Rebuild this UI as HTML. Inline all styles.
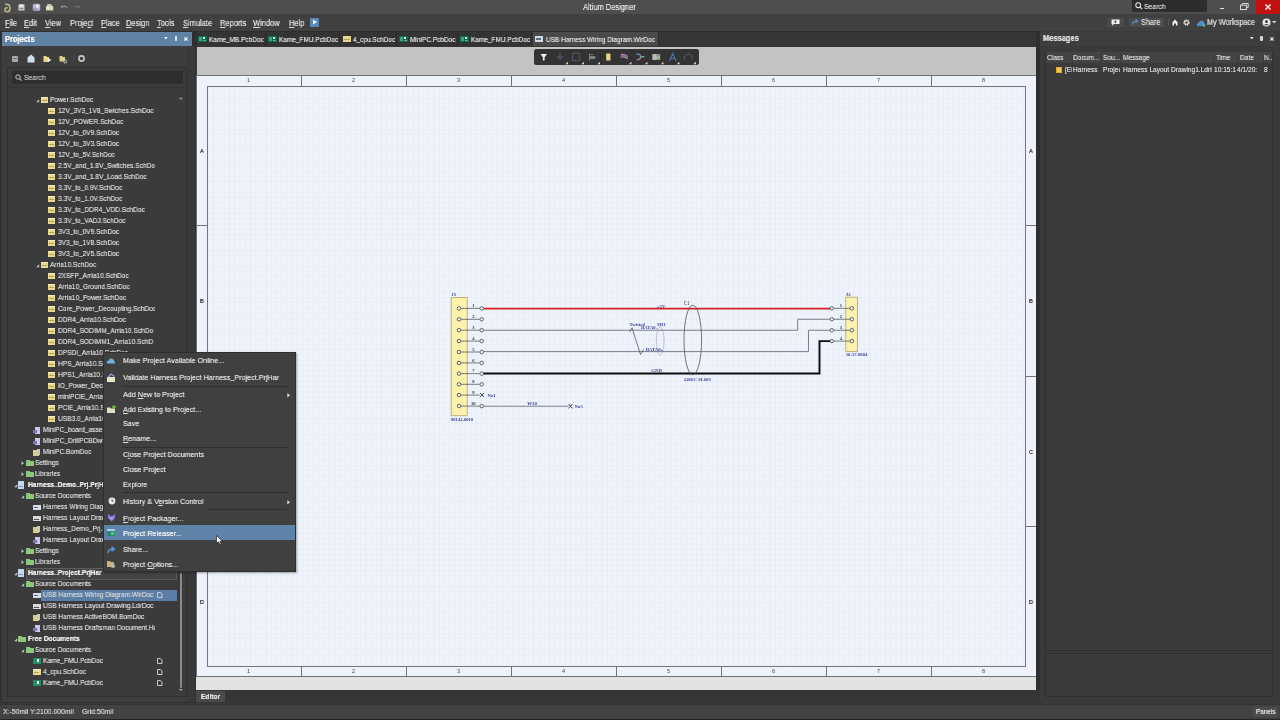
<!DOCTYPE html><html><head><meta charset="utf-8"><style>
*{margin:0;padding:0;box-sizing:border-box}
html,body{width:1280px;height:720px;overflow:hidden;background:#3a3a3a;font-family:"Liberation Sans",sans-serif}
div{position:absolute}
.t{white-space:nowrap;will-change:transform;transform-origin:0 50%;text-shadow:0 0 0.5px currentColor}
svg{position:absolute;overflow:visible}
</style></head><body><div style="left:0px;top:0px;width:1280px;height:13.5px;background:#4e4e4e"></div>
<svg style="left:3px;top:1.5px;" width="8" height="10" viewBox="0 0 8 10"><path d="M2.2 2.2 Q6.8 1.8 7 5.8 Q7.2 9.6 4.3 9.8 Q1.6 9.9 1.9 7.4 Q2.2 5.6 4.6 5.9" fill="none" stroke="#c8bb82" stroke-width="1.5"/></svg>
<svg style="left:17.5px;top:3.5px;" width="7" height="7" viewBox="0 0 7 7"><rect x="0.5" y="0.5" width="6" height="6" fill="#d8d8d8"/><rect x="1.5" y="3.8" width="4" height="1.6" fill="#8a8a8a"/><rect x="1.8" y="0.5" width="3.4" height="1.8" fill="#f4f4f4"/></svg>
<svg style="left:31.5px;top:3px;" width="9" height="8.5" viewBox="0 0 9 8.5"><rect x="0.8" y="0.8" width="7.4" height="7" rx="1.5" fill="#b6b4d6"/><circle cx="5.5" cy="3.2" r="1.7" fill="#e8e8f4"/><rect x="1.5" y="5.5" width="3" height="1.5" fill="#8886b0"/></svg>
<svg style="left:44.5px;top:3px;" width="9" height="8" viewBox="0 0 9 8"><path d="M1 3 H8.2 V7.4 H1 Z" fill="#d8dcc0"/><path d="M2.2 3 V1 H5.8 L7 2.2 V3" fill="#c8ccb0"/><rect x="2" y="4.2" width="2" height="1.6" fill="#f0f4d8"/></svg>
<svg style="left:59.5px;top:4px;" width="8" height="5" viewBox="0 0 8 5"><path d="M1.5 3.8 Q4.5 0.8 7.2 3.6" fill="none" stroke="#8a8a8a" stroke-width="1.3"/><path d="M0.3 2.2 L2.4 4.6 L3.1 1.6 Z" fill="#8a8a8a"/></svg>
<svg style="left:72.5px;top:4px;" width="8" height="5" viewBox="0 0 8 5"><path d="M0.8 3.6 Q3.5 0.8 6.5 3.8" fill="none" stroke="#6a6a6a" stroke-width="1.3"/><path d="M7.7 2.2 L5.6 4.6 L4.9 1.6 Z" fill="#6a6a6a"/></svg>
<div class="t" style="left:582.5px;top:2.04px;font-size:8.40px;line-height:10.92px;color:#e2e2e2;font-weight:normal;transform:scaleX(0.8929);">Altium Designer</div>
<div style="left:1132px;top:0px;width:75px;height:11.5px;background:#2d2d2d;border-radius:0 0 2px 2px"></div>
<svg style="left:1134.5px;top:2px;" width="8" height="8" viewBox="0 0 8 8"><circle cx="3.2" cy="3.2" r="2.4" fill="none" stroke="#e0e0e0" stroke-width="1.1"/><path d="M5 5 L7.2 7.2" stroke="#e0e0e0" stroke-width="1.2"/></svg>
<div class="t" style="left:1143.5px;top:1.65px;font-size:7.62px;line-height:9.90px;color:#d0d0d0;font-weight:normal;transform:scaleX(0.8929);">Search</div>
<div style="left:1219.5px;top:8.2px;width:4.5px;height:1.3px;background:#e0e0e0"></div>
<svg style="left:1240px;top:3px;" width="9" height="7" viewBox="0 0 9 7"><rect x="0.5" y="2.2" width="6" height="4.3" fill="none" stroke="#d8d8d8" stroke-width="1"/><path d="M2.2 2.2 V0.5 H8.2 V4.5 H6.6" fill="none" stroke="#d8d8d8" stroke-width="1"/></svg>
<div style="left:1256px;top:0px;width:24px;height:13.5px;background:#c2120f"></div>
<svg style="left:1265px;top:3.5px;" width="6" height="6" viewBox="0 0 6 6"><path d="M0.5 0.5 L5.5 5.5 M5.5 0.5 L0.5 5.5" stroke="#fff" stroke-width="1.4"/></svg>
<div style="left:0px;top:13.5px;width:1280px;height:17.5px;background:#404040"></div>
<div class="t" style="left:5px;top:17.54px;font-size:8.40px;line-height:10.92px;color:#dcdcdc;font-weight:normal;transform:scaleX(0.8929);"><u>F</u>ile</div>
<div class="t" style="left:24px;top:17.54px;font-size:8.40px;line-height:10.92px;color:#dcdcdc;font-weight:normal;transform:scaleX(0.8929);"><u>E</u>dit</div>
<div class="t" style="left:45px;top:17.54px;font-size:8.40px;line-height:10.92px;color:#dcdcdc;font-weight:normal;transform:scaleX(0.8929);"><u>V</u>iew</div>
<div class="t" style="left:69.5px;top:17.54px;font-size:8.40px;line-height:10.92px;color:#dcdcdc;font-weight:normal;transform:scaleX(0.8929);">Proje<u>c</u>t</div>
<div class="t" style="left:100.5px;top:17.54px;font-size:8.40px;line-height:10.92px;color:#dcdcdc;font-weight:normal;transform:scaleX(0.8929);"><u>P</u>lace</div>
<div class="t" style="left:125.7px;top:17.54px;font-size:8.40px;line-height:10.92px;color:#dcdcdc;font-weight:normal;transform:scaleX(0.8929);"><u>D</u>esign</div>
<div class="t" style="left:157px;top:17.54px;font-size:8.40px;line-height:10.92px;color:#dcdcdc;font-weight:normal;transform:scaleX(0.8929);"><u>T</u>ools</div>
<div class="t" style="left:182.7px;top:17.54px;font-size:8.40px;line-height:10.92px;color:#dcdcdc;font-weight:normal;transform:scaleX(0.8929);"><u>S</u>imulate</div>
<div class="t" style="left:220px;top:17.54px;font-size:8.40px;line-height:10.92px;color:#dcdcdc;font-weight:normal;transform:scaleX(0.8929);"><u>R</u>eports</div>
<div class="t" style="left:253px;top:17.54px;font-size:8.40px;line-height:10.92px;color:#dcdcdc;font-weight:normal;transform:scaleX(0.8929);"><u>W</u>indow</div>
<div class="t" style="left:288.7px;top:17.54px;font-size:8.40px;line-height:10.92px;color:#dcdcdc;font-weight:normal;transform:scaleX(0.8929);"><u>H</u>elp</div>
<div style="left:310px;top:17.5px;width:9px;height:9px;background:#5d86b8;border-radius:1px"></div>
<svg style="left:312px;top:19px;" width="6" height="6" viewBox="0 0 6 6"><path d="M1 0.5 L5 3 L1 5.5 Z" fill="#fff"/></svg>
<div style="left:1107px;top:17.5px;width:17px;height:9px;background:#4b4b4b"></div>
<svg style="left:1111px;top:19px;" width="9" height="7" viewBox="0 0 9 7"><path d="M0.5 0.5 H8.5 V5 H3 L1.2 6.8 V5 H0.5 Z" fill="#f0f0f0"/><rect x="3.6" y="1.6" width="1.6" height="2.4" fill="#4b4b4b"/></svg>
<div style="left:1128.8px;top:17.5px;width:35px;height:9px;background:#4c4c4c"></div>
<svg style="left:1131.5px;top:19px;" width="7" height="6" viewBox="0 0 7 6"><path d="M0.5 5.5 Q1 2 5 2 M3.5 0.5 L5.5 2 L3.5 3.6" fill="none" stroke="#5b8fd0" stroke-width="1.2"/></svg>
<div class="t" style="left:1140.5px;top:17.68px;font-size:8.18px;line-height:10.63px;color:#d8d8d8;font-weight:normal;transform:scaleX(0.8929);">Share</div>
<div style="left:1168px;top:18px;width:1px;height:8px;background:#555"></div>
<svg style="left:1171.5px;top:18.5px;" width="6" height="7" viewBox="0 0 6 7"><path d="M0.5 3.2 L3 0.6 L5.5 3.2 V6.5 H4 V4.5 H2 V6.5 H0.5 Z" fill="#f4f4f4"/></svg>
<svg style="left:1183px;top:18.5px;" width="7" height="7" viewBox="0 0 7 7"><circle cx="3.5" cy="3.5" r="2.3" fill="none" stroke="#f0f0f0" stroke-width="1.6" stroke-dasharray="1.2 0.6"/><circle cx="3.5" cy="3.5" r="1.6" fill="none" stroke="#f0f0f0" stroke-width="0.8"/></svg>
<svg style="left:1195.5px;top:18.5px;" width="10" height="8" viewBox="0 0 10 8"><path d="M1 7 Q0 4.5 2.5 4 Q3 1 6 1.5 Q8.5 2 8.5 4.5 Q10 5 9.2 7 Z" fill="#4a90d0"/><circle cx="8" cy="6.6" r="1.4" fill="#5bb05b"/></svg>
<div class="t" style="left:1206.5px;top:17.68px;font-size:8.18px;line-height:10.63px;color:#dadada;font-weight:normal;transform:scaleX(0.8929);">My Workspace</div>
<svg style="left:1261.5px;top:18px;" width="9" height="9" viewBox="0 0 9 9"><circle cx="4.5" cy="4.5" r="4" fill="#e8e8e8"/><circle cx="4.5" cy="3.4" r="1.5" fill="#404040"/><path d="M1.8 7.3 Q4.5 4.6 7.2 7.3" fill="#404040"/></svg>
<svg style="left:1272px;top:21px;" width="5" height="3" viewBox="0 0 5 3"><path d="M0 0 H4.5 L2.25 2.5 Z" fill="#d0d0d0"/></svg>
<div style="left:0px;top:31px;width:196px;height:672px;background:#2f2f2f"></div>
<div style="left:0px;top:46px;width:195px;height:656px;background:#393939"></div>
<div style="left:0px;top:46px;width:2px;height:657px;background:#333"></div>
<div style="left:2px;top:46px;width:185px;height:656px;background:#3d3d3d"></div>
<div style="left:2px;top:32px;width:190px;height:14px;background:#6082a5"></div>
<div class="t" style="left:5px;top:33.74px;font-size:8.40px;line-height:10.92px;color:#ffffff;font-weight:bold;transform:scaleX(0.8929);">Projects</div>
<svg style="left:164px;top:37px;" width="4" height="3" viewBox="0 0 4 3"><path d="M0 0 H3.6 L1.8 2.6 Z" fill="#f4f8ff"/></svg>
<div style="left:174.5px;top:36px;width:2.5px;height:4.5px;background:#dde8f8;border-radius:1px"></div>
<svg style="left:184px;top:37px;" width="4" height="4" viewBox="0 0 4 4"><path d="M0.3 0.3 L3.5 3.5 M3.5 0.3 L0.3 3.5" stroke="#f4f8ff" stroke-width="1.1"/></svg>
<div style="left:11.5px;top:55.5px;width:6px;height:6px;background:#a8a8a8;border-radius:1px"></div>
<div style="left:12.5px;top:58px;width:4px;height:1px;background:#666"></div>
<svg style="left:27px;top:54px;" width="8" height="9" viewBox="0 0 8 9"><path d="M4 0.5 L7.5 3.5 V8.5 H0.5 V3.5 Z" fill="#cfe0f4"/></svg>
<svg style="left:43px;top:54.5px;" width="9" height="8" viewBox="0 0 9 8"><path d="M0.5 1 H3 L4 2 H6 V7 H0.5 Z" fill="#e8d88a"/><path d="M5 3 L8.5 5 L5 7 Z" fill="#f4f4f4"/></svg>
<svg style="left:59px;top:54.5px;" width="9" height="9" viewBox="0 0 9 9"><path d="M0.5 1 H3 L4 2 H6 V6.5 H0.5 Z" fill="#e0cf86"/><circle cx="6.2" cy="6.5" r="1.6" fill="none" stroke="#bbb" stroke-width="1"/></svg>
<div style="left:72.5px;top:54px;width:0.8px;height:9px;background:#4a4a4a"></div>
<svg style="left:78px;top:55px;" width="7" height="7" viewBox="0 0 7 7"><circle cx="3.5" cy="3.5" r="2.6" fill="none" stroke="#c8c8c8" stroke-width="1.6"/></svg>
<div style="left:6.8px;top:66.5px;width:180.5px;height:630.5px;background:#3b3b3b;border:1px solid #303030"></div>
<div style="left:11.5px;top:71px;width:171px;height:12.5px;background:#2e2e2e"></div>
<div style="left:8.5px;top:86.6px;width:178px;height:0.8px;background:#333"></div>
<svg style="left:14.5px;top:73.5px;" width="8" height="8" viewBox="0 0 8 8"><circle cx="3" cy="3" r="2.2" fill="none" stroke="#c8c8c8" stroke-width="1"/><path d="M4.6 4.6 L6.6 6.6" stroke="#c8c8c8" stroke-width="1.2"/></svg>
<div class="t" style="left:24px;top:72.85px;font-size:7.62px;line-height:9.90px;color:#b8b8b8;font-weight:normal;transform:scaleX(0.8929);">Search</div>
<div style="left:196px;top:31px;width:840px;height:15.8px;background:#363636"></div>
<div style="left:196px;top:31px;width:840px;height:0.8px;background:#2c2c2c"></div>
<div style="left:196px;top:31.8px;width:69px;height:14.2px;background:#343434"></div>
<div style="left:265px;top:31.8px;width:1px;height:14.2px;background:#2a2a2a"></div>
<div style="left:198.3px;top:35.6px;width:8.8px;height:6.6px;background:#0f6a48"></div>
<div style="left:199.3px;top:36.6px;width:2.8px;height:4.4px;background:#48a078"></div>
<div style="left:202.9px;top:36.8px;width:2.4px;height:2.2px;background:#c4ffe4"></div>
<div style="left:202.7px;top:40px;width:3px;height:1.2px;background:#5cb88c"></div>
<div class="t" style="left:209px;top:34.67px;font-size:7.28px;line-height:9.46px;color:#dadada;font-weight:normal;transform:scaleX(0.8929);">Kame<span style="position:relative;top:-0.9px">_</span>MB.PcbDoc</div>
<div style="left:266px;top:31.8px;width:73px;height:14.2px;background:#343434"></div>
<div style="left:339px;top:31.8px;width:1px;height:14.2px;background:#2a2a2a"></div>
<div style="left:268.3px;top:35.6px;width:8.8px;height:6.6px;background:#0f6a48"></div>
<div style="left:269.3px;top:36.6px;width:2.8px;height:4.4px;background:#48a078"></div>
<div style="left:272.9px;top:36.8px;width:2.4px;height:2.2px;background:#c4ffe4"></div>
<div style="left:272.7px;top:40px;width:3px;height:1.2px;background:#5cb88c"></div>
<div class="t" style="left:279px;top:34.67px;font-size:7.28px;line-height:9.46px;color:#dadada;font-weight:normal;transform:scaleX(0.8929);">Kame<span style="position:relative;top:-0.9px">_</span>FMU.PcbDoc</div>
<div style="left:340px;top:31.8px;width:56px;height:14.2px;background:#343434"></div>
<div style="left:396px;top:31.8px;width:1px;height:14.2px;background:#2a2a2a"></div>
<div style="left:342.5px;top:35.8px;width:8px;height:6px;background:#e6d690"></div>
<div style="left:343.5px;top:38.5px;width:6px;height:1px;background:#b8a458"></div>
<div class="t" style="left:353px;top:34.67px;font-size:7.28px;line-height:9.46px;color:#dadada;font-weight:normal;transform:scaleX(0.8929);">4<span style="position:relative;top:-0.9px">_</span>cpu.SchDoc</div>
<div style="left:397px;top:31.8px;width:60px;height:14.2px;background:#343434"></div>
<div style="left:457px;top:31.8px;width:1px;height:14.2px;background:#2a2a2a"></div>
<div style="left:399.3px;top:35.6px;width:8.8px;height:6.6px;background:#0f6a48"></div>
<div style="left:400.3px;top:36.6px;width:2.8px;height:4.4px;background:#48a078"></div>
<div style="left:403.9px;top:36.8px;width:2.4px;height:2.2px;background:#c4ffe4"></div>
<div style="left:403.7px;top:40px;width:3px;height:1.2px;background:#5cb88c"></div>
<div class="t" style="left:410px;top:34.67px;font-size:7.28px;line-height:9.46px;color:#dadada;font-weight:normal;transform:scaleX(0.8929);">MiniPC.PcbDoc</div>
<div style="left:458px;top:31.8px;width:72.5px;height:14.2px;background:#343434"></div>
<div style="left:530.5px;top:31.8px;width:1px;height:14.2px;background:#2a2a2a"></div>
<div style="left:460.3px;top:35.6px;width:8.8px;height:6.6px;background:#0f6a48"></div>
<div style="left:461.3px;top:36.6px;width:2.8px;height:4.4px;background:#48a078"></div>
<div style="left:464.9px;top:36.8px;width:2.4px;height:2.2px;background:#c4ffe4"></div>
<div style="left:464.7px;top:40px;width:3px;height:1.2px;background:#5cb88c"></div>
<div class="t" style="left:471px;top:34.67px;font-size:7.28px;line-height:9.46px;color:#dadada;font-weight:normal;transform:scaleX(0.8929);">Kame<span style="position:relative;top:-0.9px">_</span>FMU.PcbDoc</div>
<div style="left:532.5px;top:31.8px;width:125.5px;height:14.2px;background:#4a4a4a"></div>
<div style="left:658px;top:31.8px;width:1px;height:14.2px;background:#2a2a2a"></div>
<div style="left:535.0px;top:35.8px;width:8px;height:6px;background:#d4d8e4"></div>
<div style="left:536.0px;top:38.3px;width:4.5px;height:1.6px;background:#5a6a8a"></div>
<div class="t" style="left:545.5px;top:34.67px;font-size:7.28px;line-height:9.46px;color:#dadada;font-weight:normal;transform:scaleX(0.8929);">USB Harness Wiring Diagram.WirDoc</div>
<div style="left:197px;top:46.8px;width:839px;height:643.2px;background:#c3c3c3"></div>
<div style="left:196px;top:676px;width:840px;height:14px;background:#e2e2e2"></div>
<div style="left:533.7px;top:49px;width:165.5px;height:15.7px;background:#333;border-radius:2.5px"></div>
<div style="left:196px;top:75px;width:840px;height:602px;background:#eef2fa;border-top:1px solid #6d7178;border-bottom:1px solid #6d7178;border-left:1px solid #6d7178"></div>
<div style="left:207px;top:86px;width:819px;height:580.5px;background-color:#eff3fb;background-image:linear-gradient(#e8edf6 0.8px,transparent 0.8px),linear-gradient(90deg,#e8edf6 0.8px,transparent 0.8px);background-size:5.25px 5.25px;border:1px solid #6f7680"></div>
<div style="left:301px;top:75px;width:1px;height:11px;background:#70757d"></div>
<div style="left:301px;top:666px;width:1px;height:10px;background:#70757d"></div>
<div style="left:406px;top:75px;width:1px;height:11px;background:#70757d"></div>
<div style="left:406px;top:666px;width:1px;height:10px;background:#70757d"></div>
<div style="left:511px;top:75px;width:1px;height:11px;background:#70757d"></div>
<div style="left:511px;top:666px;width:1px;height:10px;background:#70757d"></div>
<div style="left:616px;top:75px;width:1px;height:11px;background:#70757d"></div>
<div style="left:616px;top:666px;width:1px;height:10px;background:#70757d"></div>
<div style="left:721px;top:75px;width:1px;height:11px;background:#70757d"></div>
<div style="left:721px;top:666px;width:1px;height:10px;background:#70757d"></div>
<div style="left:826px;top:75px;width:1px;height:11px;background:#70757d"></div>
<div style="left:826px;top:666px;width:1px;height:10px;background:#70757d"></div>
<div style="left:931px;top:75px;width:1px;height:11px;background:#70757d"></div>
<div style="left:931px;top:666px;width:1px;height:10px;background:#70757d"></div>
<div class="t" style="left:246.9px;top:77.36px;font-size:5.60px;line-height:7.28px;color:#4a4a4a;font-weight:normal;transform:scaleX(0.8929);text-shadow:none">1</div>
<div class="t" style="left:246.9px;top:667.86px;font-size:5.60px;line-height:7.28px;color:#4a4a4a;font-weight:normal;transform:scaleX(0.8929);text-shadow:none">1</div>
<div class="t" style="left:351.9px;top:77.36px;font-size:5.60px;line-height:7.28px;color:#4a4a4a;font-weight:normal;transform:scaleX(0.8929);text-shadow:none">2</div>
<div class="t" style="left:351.9px;top:667.86px;font-size:5.60px;line-height:7.28px;color:#4a4a4a;font-weight:normal;transform:scaleX(0.8929);text-shadow:none">2</div>
<div class="t" style="left:456.9px;top:77.36px;font-size:5.60px;line-height:7.28px;color:#4a4a4a;font-weight:normal;transform:scaleX(0.8929);text-shadow:none">3</div>
<div class="t" style="left:456.9px;top:667.86px;font-size:5.60px;line-height:7.28px;color:#4a4a4a;font-weight:normal;transform:scaleX(0.8929);text-shadow:none">3</div>
<div class="t" style="left:561.9px;top:77.36px;font-size:5.60px;line-height:7.28px;color:#4a4a4a;font-weight:normal;transform:scaleX(0.8929);text-shadow:none">4</div>
<div class="t" style="left:561.9px;top:667.86px;font-size:5.60px;line-height:7.28px;color:#4a4a4a;font-weight:normal;transform:scaleX(0.8929);text-shadow:none">4</div>
<div class="t" style="left:666.9px;top:77.36px;font-size:5.60px;line-height:7.28px;color:#4a4a4a;font-weight:normal;transform:scaleX(0.8929);text-shadow:none">5</div>
<div class="t" style="left:666.9px;top:667.86px;font-size:5.60px;line-height:7.28px;color:#4a4a4a;font-weight:normal;transform:scaleX(0.8929);text-shadow:none">5</div>
<div class="t" style="left:771.9px;top:77.36px;font-size:5.60px;line-height:7.28px;color:#4a4a4a;font-weight:normal;transform:scaleX(0.8929);text-shadow:none">6</div>
<div class="t" style="left:771.9px;top:667.86px;font-size:5.60px;line-height:7.28px;color:#4a4a4a;font-weight:normal;transform:scaleX(0.8929);text-shadow:none">6</div>
<div class="t" style="left:876.9px;top:77.36px;font-size:5.60px;line-height:7.28px;color:#4a4a4a;font-weight:normal;transform:scaleX(0.8929);text-shadow:none">7</div>
<div class="t" style="left:876.9px;top:667.86px;font-size:5.60px;line-height:7.28px;color:#4a4a4a;font-weight:normal;transform:scaleX(0.8929);text-shadow:none">7</div>
<div class="t" style="left:981.9px;top:77.36px;font-size:5.60px;line-height:7.28px;color:#4a4a4a;font-weight:normal;transform:scaleX(0.8929);text-shadow:none">8</div>
<div class="t" style="left:981.9px;top:667.86px;font-size:5.60px;line-height:7.28px;color:#4a4a4a;font-weight:normal;transform:scaleX(0.8929);text-shadow:none">8</div>
<div style="left:196px;top:225.25px;width:11px;height:1px;background:#70757d"></div>
<div style="left:1025px;top:225.25px;width:11px;height:1px;background:#70757d"></div>
<div style="left:196px;top:375.5px;width:11px;height:1px;background:#70757d"></div>
<div style="left:1025px;top:375.5px;width:11px;height:1px;background:#70757d"></div>
<div style="left:196px;top:525.75px;width:11px;height:1px;background:#70757d"></div>
<div style="left:1025px;top:525.75px;width:11px;height:1px;background:#70757d"></div>
<div class="t" style="left:200px;top:147.00px;font-size:6.16px;line-height:8.01px;color:#333;font-weight:normal;transform:scaleX(0.8929);">A</div>
<div class="t" style="left:1028.5px;top:147.00px;font-size:6.16px;line-height:8.01px;color:#333;font-weight:normal;transform:scaleX(0.8929);">A</div>
<div class="t" style="left:200px;top:297.25px;font-size:6.16px;line-height:8.01px;color:#333;font-weight:normal;transform:scaleX(0.8929);">B</div>
<div class="t" style="left:1028.5px;top:297.25px;font-size:6.16px;line-height:8.01px;color:#333;font-weight:normal;transform:scaleX(0.8929);">B</div>
<div class="t" style="left:200px;top:447.50px;font-size:6.16px;line-height:8.01px;color:#333;font-weight:normal;transform:scaleX(0.8929);">C</div>
<div class="t" style="left:1028.5px;top:447.50px;font-size:6.16px;line-height:8.01px;color:#333;font-weight:normal;transform:scaleX(0.8929);">C</div>
<div class="t" style="left:200px;top:597.75px;font-size:6.16px;line-height:8.01px;color:#333;font-weight:normal;transform:scaleX(0.8929);">D</div>
<div class="t" style="left:1028.5px;top:597.75px;font-size:6.16px;line-height:8.01px;color:#333;font-weight:normal;transform:scaleX(0.8929);">D</div>
<div style="left:8.5px;top:88px;width:170px;height:605px;overflow:hidden">
<svg style="left:27.5px;top:10.700000000000003px" width="4" height="4"><path d="M3.2 0.2 V3.2 H0.2 Z" fill="#c8c8c8"/></svg>
<div style="left:32.0px;top:9.200000000000003px;width:7.5px;height:5.8px;background:#e8d890;border-top:1px solid #f4ecc0"></div>
<div style="left:33.2px;top:11.800000000000002px;width:5px;height:1px;background:#b8a058"></div>
<div style="left:41.3px;top:7.20px;width:105.20px;height:10px;overflow:hidden"><div class="t" style="left:0;top:0;font-size:7.39px;line-height:10px;color:#d2d2d2;font-weight:normal;transform:scaleX(0.8929);text-shadow:0 0 0.3px currentColor">Power.SchDoc</div></div>
<div style="left:39.3px;top:20.200000000000003px;width:7.5px;height:5.8px;background:#e8d890;border-top:1px solid #f4ecc0"></div>
<div style="left:40.5px;top:22.800000000000004px;width:5px;height:1px;background:#b8a058"></div>
<div style="left:49.1px;top:18.20px;width:97.40px;height:10px;overflow:hidden"><div class="t" style="left:0;top:0;font-size:7.39px;line-height:10px;color:#d2d2d2;font-weight:normal;transform:scaleX(0.8929);text-shadow:0 0 0.3px currentColor">12V<span style="position:relative;top:-0.9px">_</span>3V3<span style="position:relative;top:-0.9px">_</span>1V8<span style="position:relative;top:-0.9px">_</span>Swiches.SchDoc</div></div>
<div style="left:39.3px;top:31.200000000000003px;width:7.5px;height:5.8px;background:#e8d890;border-top:1px solid #f4ecc0"></div>
<div style="left:40.5px;top:33.800000000000004px;width:5px;height:1px;background:#b8a058"></div>
<div style="left:49.1px;top:29.20px;width:97.40px;height:10px;overflow:hidden"><div class="t" style="left:0;top:0;font-size:7.39px;line-height:10px;color:#d2d2d2;font-weight:normal;transform:scaleX(0.8929);text-shadow:0 0 0.3px currentColor">12V<span style="position:relative;top:-0.9px">_</span>POWER.SchDoc</div></div>
<div style="left:39.3px;top:42.19999999999999px;width:7.5px;height:5.8px;background:#e8d890;border-top:1px solid #f4ecc0"></div>
<div style="left:40.5px;top:44.79999999999999px;width:5px;height:1px;background:#b8a058"></div>
<div style="left:49.1px;top:40.20px;width:97.40px;height:10px;overflow:hidden"><div class="t" style="left:0;top:0;font-size:7.39px;line-height:10px;color:#d2d2d2;font-weight:normal;transform:scaleX(0.8929);text-shadow:0 0 0.3px currentColor">12V<span style="position:relative;top:-0.9px">_</span>to<span style="position:relative;top:-0.9px">_</span>0V9.SchDoc</div></div>
<div style="left:39.3px;top:53.19999999999999px;width:7.5px;height:5.8px;background:#e8d890;border-top:1px solid #f4ecc0"></div>
<div style="left:40.5px;top:55.79999999999999px;width:5px;height:1px;background:#b8a058"></div>
<div style="left:49.1px;top:51.20px;width:97.40px;height:10px;overflow:hidden"><div class="t" style="left:0;top:0;font-size:7.39px;line-height:10px;color:#d2d2d2;font-weight:normal;transform:scaleX(0.8929);text-shadow:0 0 0.3px currentColor">12V<span style="position:relative;top:-0.9px">_</span>to<span style="position:relative;top:-0.9px">_</span>3V3.SchDoc</div></div>
<div style="left:39.3px;top:64.19999999999999px;width:7.5px;height:5.8px;background:#e8d890;border-top:1px solid #f4ecc0"></div>
<div style="left:40.5px;top:66.79999999999998px;width:5px;height:1px;background:#b8a058"></div>
<div style="left:49.1px;top:62.20px;width:97.40px;height:10px;overflow:hidden"><div class="t" style="left:0;top:0;font-size:7.39px;line-height:10px;color:#d2d2d2;font-weight:normal;transform:scaleX(0.8929);text-shadow:0 0 0.3px currentColor">12V<span style="position:relative;top:-0.9px">_</span>to<span style="position:relative;top:-0.9px">_</span>5V.SchDoc</div></div>
<div style="left:39.3px;top:75.19999999999999px;width:7.5px;height:5.8px;background:#e8d890;border-top:1px solid #f4ecc0"></div>
<div style="left:40.5px;top:77.79999999999998px;width:5px;height:1px;background:#b8a058"></div>
<div style="left:49.1px;top:73.20px;width:97.40px;height:10px;overflow:hidden"><div class="t" style="left:0;top:0;font-size:7.39px;line-height:10px;color:#d2d2d2;font-weight:normal;transform:scaleX(0.8929);text-shadow:0 0 0.3px currentColor">2.5V<span style="position:relative;top:-0.9px">_</span>and<span style="position:relative;top:-0.9px">_</span>1.8V<span style="position:relative;top:-0.9px">_</span>Switches.SchDo</div></div>
<div style="left:39.3px;top:86.19999999999999px;width:7.5px;height:5.8px;background:#e8d890;border-top:1px solid #f4ecc0"></div>
<div style="left:40.5px;top:88.79999999999998px;width:5px;height:1px;background:#b8a058"></div>
<div style="left:49.1px;top:84.20px;width:97.40px;height:10px;overflow:hidden"><div class="t" style="left:0;top:0;font-size:7.39px;line-height:10px;color:#d2d2d2;font-weight:normal;transform:scaleX(0.8929);text-shadow:0 0 0.3px currentColor">3.3V<span style="position:relative;top:-0.9px">_</span>and<span style="position:relative;top:-0.9px">_</span>1.8V<span style="position:relative;top:-0.9px">_</span>Load.SchDoc</div></div>
<div style="left:39.3px;top:97.19999999999999px;width:7.5px;height:5.8px;background:#e8d890;border-top:1px solid #f4ecc0"></div>
<div style="left:40.5px;top:99.79999999999998px;width:5px;height:1px;background:#b8a058"></div>
<div style="left:49.1px;top:95.20px;width:97.40px;height:10px;overflow:hidden"><div class="t" style="left:0;top:0;font-size:7.39px;line-height:10px;color:#d2d2d2;font-weight:normal;transform:scaleX(0.8929);text-shadow:0 0 0.3px currentColor">3.3V<span style="position:relative;top:-0.9px">_</span>to<span style="position:relative;top:-0.9px">_</span>0.9V.SchDoc</div></div>
<div style="left:39.3px;top:108.19999999999999px;width:7.5px;height:5.8px;background:#e8d890;border-top:1px solid #f4ecc0"></div>
<div style="left:40.5px;top:110.79999999999998px;width:5px;height:1px;background:#b8a058"></div>
<div style="left:49.1px;top:106.20px;width:97.40px;height:10px;overflow:hidden"><div class="t" style="left:0;top:0;font-size:7.39px;line-height:10px;color:#d2d2d2;font-weight:normal;transform:scaleX(0.8929);text-shadow:0 0 0.3px currentColor">3.3V<span style="position:relative;top:-0.9px">_</span>to<span style="position:relative;top:-0.9px">_</span>1.0V.SchDoc</div></div>
<div style="left:39.3px;top:119.19999999999999px;width:7.5px;height:5.8px;background:#e8d890;border-top:1px solid #f4ecc0"></div>
<div style="left:40.5px;top:121.79999999999998px;width:5px;height:1px;background:#b8a058"></div>
<div style="left:49.1px;top:117.20px;width:97.40px;height:10px;overflow:hidden"><div class="t" style="left:0;top:0;font-size:7.39px;line-height:10px;color:#d2d2d2;font-weight:normal;transform:scaleX(0.8929);text-shadow:0 0 0.3px currentColor">3.3V<span style="position:relative;top:-0.9px">_</span>to<span style="position:relative;top:-0.9px">_</span>DDR4<span style="position:relative;top:-0.9px">_</span>VDD.SchDoc</div></div>
<div style="left:39.3px;top:130.2px;width:7.5px;height:5.8px;background:#e8d890;border-top:1px solid #f4ecc0"></div>
<div style="left:40.5px;top:132.79999999999998px;width:5px;height:1px;background:#b8a058"></div>
<div style="left:49.1px;top:128.20px;width:97.40px;height:10px;overflow:hidden"><div class="t" style="left:0;top:0;font-size:7.39px;line-height:10px;color:#d2d2d2;font-weight:normal;transform:scaleX(0.8929);text-shadow:0 0 0.3px currentColor">3.3V<span style="position:relative;top:-0.9px">_</span>to<span style="position:relative;top:-0.9px">_</span>VADJ.SchDoc</div></div>
<div style="left:39.3px;top:141.2px;width:7.5px;height:5.8px;background:#e8d890;border-top:1px solid #f4ecc0"></div>
<div style="left:40.5px;top:143.79999999999998px;width:5px;height:1px;background:#b8a058"></div>
<div style="left:49.1px;top:139.20px;width:97.40px;height:10px;overflow:hidden"><div class="t" style="left:0;top:0;font-size:7.39px;line-height:10px;color:#d2d2d2;font-weight:normal;transform:scaleX(0.8929);text-shadow:0 0 0.3px currentColor">3V3<span style="position:relative;top:-0.9px">_</span>to<span style="position:relative;top:-0.9px">_</span>0V9.SchDoc</div></div>
<div style="left:39.3px;top:152.2px;width:7.5px;height:5.8px;background:#e8d890;border-top:1px solid #f4ecc0"></div>
<div style="left:40.5px;top:154.79999999999998px;width:5px;height:1px;background:#b8a058"></div>
<div style="left:49.1px;top:150.20px;width:97.40px;height:10px;overflow:hidden"><div class="t" style="left:0;top:0;font-size:7.39px;line-height:10px;color:#d2d2d2;font-weight:normal;transform:scaleX(0.8929);text-shadow:0 0 0.3px currentColor">3V3<span style="position:relative;top:-0.9px">_</span>to<span style="position:relative;top:-0.9px">_</span>1V8.SchDoc</div></div>
<div style="left:39.3px;top:163.2px;width:7.5px;height:5.8px;background:#e8d890;border-top:1px solid #f4ecc0"></div>
<div style="left:40.5px;top:165.79999999999998px;width:5px;height:1px;background:#b8a058"></div>
<div style="left:49.1px;top:161.20px;width:97.40px;height:10px;overflow:hidden"><div class="t" style="left:0;top:0;font-size:7.39px;line-height:10px;color:#d2d2d2;font-weight:normal;transform:scaleX(0.8929);text-shadow:0 0 0.3px currentColor">3V3<span style="position:relative;top:-0.9px">_</span>to<span style="position:relative;top:-0.9px">_</span>2V5.SchDoc</div></div>
<svg style="left:27.5px;top:175.7px" width="4" height="4"><path d="M3.2 0.2 V3.2 H0.2 Z" fill="#c8c8c8"/></svg>
<div style="left:32.0px;top:174.2px;width:7.5px;height:5.8px;background:#e8d890;border-top:1px solid #f4ecc0"></div>
<div style="left:33.2px;top:176.79999999999998px;width:5px;height:1px;background:#b8a058"></div>
<div style="left:41.3px;top:172.20px;width:105.20px;height:10px;overflow:hidden"><div class="t" style="left:0;top:0;font-size:7.39px;line-height:10px;color:#d2d2d2;font-weight:normal;transform:scaleX(0.8929);text-shadow:0 0 0.3px currentColor">Arria10.SchDoc</div></div>
<div style="left:39.3px;top:185.2px;width:7.5px;height:5.8px;background:#e8d890;border-top:1px solid #f4ecc0"></div>
<div style="left:40.5px;top:187.79999999999998px;width:5px;height:1px;background:#b8a058"></div>
<div style="left:49.1px;top:183.20px;width:97.40px;height:10px;overflow:hidden"><div class="t" style="left:0;top:0;font-size:7.39px;line-height:10px;color:#d2d2d2;font-weight:normal;transform:scaleX(0.8929);text-shadow:0 0 0.3px currentColor">2XSFP<span style="position:relative;top:-0.9px">_</span>Arria10.SchDoc</div></div>
<div style="left:39.3px;top:196.2px;width:7.5px;height:5.8px;background:#e8d890;border-top:1px solid #f4ecc0"></div>
<div style="left:40.5px;top:198.79999999999998px;width:5px;height:1px;background:#b8a058"></div>
<div style="left:49.1px;top:194.20px;width:97.40px;height:10px;overflow:hidden"><div class="t" style="left:0;top:0;font-size:7.39px;line-height:10px;color:#d2d2d2;font-weight:normal;transform:scaleX(0.8929);text-shadow:0 0 0.3px currentColor">Arria10<span style="position:relative;top:-0.9px">_</span>Ground.SchDoc</div></div>
<div style="left:39.3px;top:207.2px;width:7.5px;height:5.8px;background:#e8d890;border-top:1px solid #f4ecc0"></div>
<div style="left:40.5px;top:209.79999999999998px;width:5px;height:1px;background:#b8a058"></div>
<div style="left:49.1px;top:205.20px;width:97.40px;height:10px;overflow:hidden"><div class="t" style="left:0;top:0;font-size:7.39px;line-height:10px;color:#d2d2d2;font-weight:normal;transform:scaleX(0.8929);text-shadow:0 0 0.3px currentColor">Arria10<span style="position:relative;top:-0.9px">_</span>Power.SchDoc</div></div>
<div style="left:39.3px;top:218.2px;width:7.5px;height:5.8px;background:#e8d890;border-top:1px solid #f4ecc0"></div>
<div style="left:40.5px;top:220.79999999999998px;width:5px;height:1px;background:#b8a058"></div>
<div style="left:49.1px;top:216.20px;width:97.40px;height:10px;overflow:hidden"><div class="t" style="left:0;top:0;font-size:7.39px;line-height:10px;color:#d2d2d2;font-weight:normal;transform:scaleX(0.8929);text-shadow:0 0 0.3px currentColor">Core<span style="position:relative;top:-0.9px">_</span>Power<span style="position:relative;top:-0.9px">_</span>Decoupling.SchDoc</div></div>
<div style="left:39.3px;top:229.2px;width:7.5px;height:5.8px;background:#e8d890;border-top:1px solid #f4ecc0"></div>
<div style="left:40.5px;top:231.79999999999998px;width:5px;height:1px;background:#b8a058"></div>
<div style="left:49.1px;top:227.20px;width:97.40px;height:10px;overflow:hidden"><div class="t" style="left:0;top:0;font-size:7.39px;line-height:10px;color:#d2d2d2;font-weight:normal;transform:scaleX(0.8929);text-shadow:0 0 0.3px currentColor">DDR4<span style="position:relative;top:-0.9px">_</span>Arria10.SchDoc</div></div>
<div style="left:39.3px;top:240.2px;width:7.5px;height:5.8px;background:#e8d890;border-top:1px solid #f4ecc0"></div>
<div style="left:40.5px;top:242.79999999999998px;width:5px;height:1px;background:#b8a058"></div>
<div style="left:49.1px;top:238.20px;width:97.40px;height:10px;overflow:hidden"><div class="t" style="left:0;top:0;font-size:7.39px;line-height:10px;color:#d2d2d2;font-weight:normal;transform:scaleX(0.8929);text-shadow:0 0 0.3px currentColor">DDR4<span style="position:relative;top:-0.9px">_</span>SODIMM<span style="position:relative;top:-0.9px">_</span>Arria10.SchDo</div></div>
<div style="left:39.3px;top:251.2px;width:7.5px;height:5.8px;background:#e8d890;border-top:1px solid #f4ecc0"></div>
<div style="left:40.5px;top:253.79999999999998px;width:5px;height:1px;background:#b8a058"></div>
<div style="left:49.1px;top:249.20px;width:97.40px;height:10px;overflow:hidden"><div class="t" style="left:0;top:0;font-size:7.39px;line-height:10px;color:#d2d2d2;font-weight:normal;transform:scaleX(0.8929);text-shadow:0 0 0.3px currentColor">DDR4<span style="position:relative;top:-0.9px">_</span>SODIMM1<span style="position:relative;top:-0.9px">_</span>Arria10.SchD</div></div>
<div style="left:39.3px;top:262.2px;width:7.5px;height:5.8px;background:#e8d890;border-top:1px solid #f4ecc0"></div>
<div style="left:40.5px;top:264.8px;width:5px;height:1px;background:#b8a058"></div>
<div style="left:49.1px;top:260.20px;width:97.40px;height:10px;overflow:hidden"><div class="t" style="left:0;top:0;font-size:7.39px;line-height:10px;color:#d2d2d2;font-weight:normal;transform:scaleX(0.8929);text-shadow:0 0 0.3px currentColor">DPSDI<span style="position:relative;top:-0.9px">_</span>Arria10.SchDoc</div></div>
<div style="left:39.3px;top:273.2px;width:7.5px;height:5.8px;background:#e8d890;border-top:1px solid #f4ecc0"></div>
<div style="left:40.5px;top:275.8px;width:5px;height:1px;background:#b8a058"></div>
<div style="left:49.1px;top:271.20px;width:97.40px;height:10px;overflow:hidden"><div class="t" style="left:0;top:0;font-size:7.39px;line-height:10px;color:#d2d2d2;font-weight:normal;transform:scaleX(0.8929);text-shadow:0 0 0.3px currentColor">HPS<span style="position:relative;top:-0.9px">_</span>Arria10.SchDoc</div></div>
<div style="left:39.3px;top:284.2px;width:7.5px;height:5.8px;background:#e8d890;border-top:1px solid #f4ecc0"></div>
<div style="left:40.5px;top:286.8px;width:5px;height:1px;background:#b8a058"></div>
<div style="left:49.1px;top:282.20px;width:97.40px;height:10px;overflow:hidden"><div class="t" style="left:0;top:0;font-size:7.39px;line-height:10px;color:#d2d2d2;font-weight:normal;transform:scaleX(0.8929);text-shadow:0 0 0.3px currentColor">HPS1<span style="position:relative;top:-0.9px">_</span>Arria10.SchDoc</div></div>
<div style="left:39.3px;top:295.2px;width:7.5px;height:5.8px;background:#e8d890;border-top:1px solid #f4ecc0"></div>
<div style="left:40.5px;top:297.8px;width:5px;height:1px;background:#b8a058"></div>
<div style="left:49.1px;top:293.20px;width:97.40px;height:10px;overflow:hidden"><div class="t" style="left:0;top:0;font-size:7.39px;line-height:10px;color:#d2d2d2;font-weight:normal;transform:scaleX(0.8929);text-shadow:0 0 0.3px currentColor">IO<span style="position:relative;top:-0.9px">_</span>Power<span style="position:relative;top:-0.9px">_</span>Decoupling.SchDoc</div></div>
<div style="left:39.3px;top:306.2px;width:7.5px;height:5.8px;background:#e8d890;border-top:1px solid #f4ecc0"></div>
<div style="left:40.5px;top:308.8px;width:5px;height:1px;background:#b8a058"></div>
<div style="left:49.1px;top:304.20px;width:97.40px;height:10px;overflow:hidden"><div class="t" style="left:0;top:0;font-size:7.39px;line-height:10px;color:#d2d2d2;font-weight:normal;transform:scaleX(0.8929);text-shadow:0 0 0.3px currentColor">miniPCIE<span style="position:relative;top:-0.9px">_</span>Arria10.SchDoc</div></div>
<div style="left:39.3px;top:317.2px;width:7.5px;height:5.8px;background:#e8d890;border-top:1px solid #f4ecc0"></div>
<div style="left:40.5px;top:319.8px;width:5px;height:1px;background:#b8a058"></div>
<div style="left:49.1px;top:315.20px;width:97.40px;height:10px;overflow:hidden"><div class="t" style="left:0;top:0;font-size:7.39px;line-height:10px;color:#d2d2d2;font-weight:normal;transform:scaleX(0.8929);text-shadow:0 0 0.3px currentColor">PCIE<span style="position:relative;top:-0.9px">_</span>Arria10.SchDoc</div></div>
<div style="left:39.3px;top:328.2px;width:7.5px;height:5.8px;background:#e8d890;border-top:1px solid #f4ecc0"></div>
<div style="left:40.5px;top:330.8px;width:5px;height:1px;background:#b8a058"></div>
<div style="left:49.1px;top:326.20px;width:97.40px;height:10px;overflow:hidden"><div class="t" style="left:0;top:0;font-size:7.39px;line-height:10px;color:#d2d2d2;font-weight:normal;transform:scaleX(0.8929);text-shadow:0 0 0.3px currentColor">USB3.0<span style="position:relative;top:-0.9px">_</span>Arria10.SchDoc</div></div>
<div style="left:26.700000000000003px;top:338.59999999999997px;width:5px;height:7px;background:#c8c8e8"></div>
<div style="left:24.700000000000003px;top:341.7px;width:4px;height:3.5px;background:#8a6ac0"></div>
<div style="left:34.1px;top:337.20px;width:112.40px;height:10px;overflow:hidden"><div class="t" style="left:0;top:0;font-size:7.39px;line-height:10px;color:#d2d2d2;font-weight:normal;transform:scaleX(0.8929);text-shadow:0 0 0.3px currentColor">MiniPC<span style="position:relative;top:-0.9px">_</span>board<span style="position:relative;top:-0.9px">_</span>assembly.PCBDwf</div></div>
<div style="left:26.700000000000003px;top:349.59999999999997px;width:5px;height:7px;background:#c8c8e8"></div>
<div style="left:24.700000000000003px;top:352.7px;width:4px;height:3.5px;background:#8a6ac0"></div>
<div style="left:34.1px;top:348.20px;width:112.40px;height:10px;overflow:hidden"><div class="t" style="left:0;top:0;font-size:7.39px;line-height:10px;color:#d2d2d2;font-weight:normal;transform:scaleX(0.8929);text-shadow:0 0 0.3px currentColor">MiniPC<span style="position:relative;top:-0.9px">_</span>DrillPCBDwf.PCBDwf</div></div>
<div style="left:24.700000000000003px;top:362.2px;width:6px;height:5.5px;background:#d8cf8a"></div>
<div style="left:28.200000000000003px;top:360.7px;width:3.5px;height:6px;background:#c8c8c8"></div>
<div style="left:34.1px;top:359.20px;width:112.40px;height:10px;overflow:hidden"><div class="t" style="left:0;top:0;font-size:7.39px;line-height:10px;color:#d2d2d2;font-weight:normal;transform:scaleX(0.8929);text-shadow:0 0 0.3px currentColor">MiniPC.BomDoc</div></div>
<svg style="left:12.5px;top:373.2px" width="4" height="5"><path d="M0.5 0.3 L3 2.2 L0.5 4.1 Z" fill="#c8c8c8"/></svg>
<div style="left:17.5px;top:372.7px;width:7.5px;height:5.5px;background:#8cc878;border-radius:0.5px"></div>
<div style="left:17.5px;top:371.8px;width:3.5px;height:1.4px;background:#8cc878"></div>
<div style="left:26.5px;top:370.20px;width:120.00px;height:10px;overflow:hidden"><div class="t" style="left:0;top:0;font-size:7.39px;line-height:10px;color:#d2d2d2;font-weight:normal;transform:scaleX(0.8929);text-shadow:0 0 0.3px currentColor">Settings</div></div>
<svg style="left:12.5px;top:384.2px" width="4" height="5"><path d="M0.5 0.3 L3 2.2 L0.5 4.1 Z" fill="#c8c8c8"/></svg>
<div style="left:17.5px;top:383.7px;width:7.5px;height:5.5px;background:#8cc878;border-radius:0.5px"></div>
<div style="left:17.5px;top:382.8px;width:3.5px;height:1.4px;background:#8cc878"></div>
<div style="left:26.5px;top:381.20px;width:120.00px;height:10px;overflow:hidden"><div class="t" style="left:0;top:0;font-size:7.39px;line-height:10px;color:#d2d2d2;font-weight:normal;transform:scaleX(0.8929);text-shadow:0 0 0.3px currentColor">Libraries</div></div>
<svg style="left:5.300000000000001px;top:395.7px" width="4" height="4"><path d="M3.2 0.2 V3.2 H0.2 Z" fill="#c8c8c8"/></svg>
<div style="left:9.8px;top:393.4px;width:6px;height:7.4px;background:#c6d8ee"></div>
<div style="left:10.8px;top:398.2px;width:4px;height:1px;background:#7090c0"></div>
<div style="left:19.0px;top:392.20px;width:127.50px;height:10px;overflow:hidden"><div class="t" style="left:0;top:0;font-size:7.39px;line-height:10px;color:#f0f0f0;font-weight:bold;transform:scaleX(0.8929);text-shadow:0 0 0.3px currentColor">Harness<span style="position:relative;top:-0.9px">_</span>Demo<span style="position:relative;top:-0.9px">_</span>Prj.PrjHar</div></div>
<svg style="left:12.5px;top:406.7px" width="4" height="4"><path d="M3.2 0.2 V3.2 H0.2 Z" fill="#c8c8c8"/></svg>
<div style="left:17.5px;top:405.7px;width:7.5px;height:5.5px;background:#8cc878;border-radius:0.5px"></div>
<div style="left:17.5px;top:404.8px;width:3.5px;height:1.4px;background:#8cc878"></div>
<div style="left:26.5px;top:403.20px;width:120.00px;height:10px;overflow:hidden"><div class="t" style="left:0;top:0;font-size:7.39px;line-height:10px;color:#d2d2d2;font-weight:normal;transform:scaleX(0.8929);text-shadow:0 0 0.3px currentColor">Source Documents</div></div>
<div style="left:24.700000000000003px;top:416.7px;width:7.5px;height:5.5px;background:#d8dce4"></div>
<div style="left:25.700000000000003px;top:418.7px;width:4px;height:1.5px;background:#5a6a8a"></div>
<div style="left:34.1px;top:414.20px;width:112.40px;height:10px;overflow:hidden"><div class="t" style="left:0;top:0;font-size:7.39px;line-height:10px;color:#d2d2d2;font-weight:normal;transform:scaleX(0.8929);text-shadow:0 0 0.3px currentColor">Harness Wiring Diagram.WirDoc</div></div>
<div style="left:24.700000000000003px;top:427.70000000000005px;width:7.5px;height:5.5px;background:#dadada"></div>
<div style="left:25.700000000000003px;top:430.6px;width:5px;height:1.2px;background:#555"></div>
<div style="left:34.1px;top:425.20px;width:112.40px;height:10px;overflow:hidden"><div class="t" style="left:0;top:0;font-size:7.39px;line-height:10px;color:#d2d2d2;font-weight:normal;transform:scaleX(0.8929);text-shadow:0 0 0.3px currentColor">Harness Layout Drawing.LdrDoc</div></div>
<div style="left:24.700000000000003px;top:439.20000000000005px;width:6px;height:5.5px;background:#d8cf8a"></div>
<div style="left:28.200000000000003px;top:437.70000000000005px;width:3.5px;height:6px;background:#c8c8c8"></div>
<div style="left:34.1px;top:436.20px;width:112.40px;height:10px;overflow:hidden"><div class="t" style="left:0;top:0;font-size:7.39px;line-height:10px;color:#d2d2d2;font-weight:normal;transform:scaleX(0.8929);text-shadow:0 0 0.3px currentColor">Harness<span style="position:relative;top:-0.9px">_</span>Demo<span style="position:relative;top:-0.9px">_</span>Prj.BomDoc</div></div>
<div style="left:26.700000000000003px;top:448.6px;width:5px;height:7px;background:#c8c8e8"></div>
<div style="left:24.700000000000003px;top:451.70000000000005px;width:4px;height:3.5px;background:#8a6ac0"></div>
<div style="left:34.1px;top:447.20px;width:112.40px;height:10px;overflow:hidden"><div class="t" style="left:0;top:0;font-size:7.39px;line-height:10px;color:#d2d2d2;font-weight:normal;transform:scaleX(0.8929);text-shadow:0 0 0.3px currentColor">Harness Layout Drawing1.LdrDoc</div></div>
<svg style="left:12.5px;top:461.20000000000005px" width="4" height="5"><path d="M0.5 0.3 L3 2.2 L0.5 4.1 Z" fill="#c8c8c8"/></svg>
<div style="left:17.5px;top:460.70000000000005px;width:7.5px;height:5.5px;background:#8cc878;border-radius:0.5px"></div>
<div style="left:17.5px;top:459.80000000000007px;width:3.5px;height:1.4px;background:#8cc878"></div>
<div style="left:26.5px;top:458.20px;width:120.00px;height:10px;overflow:hidden"><div class="t" style="left:0;top:0;font-size:7.39px;line-height:10px;color:#d2d2d2;font-weight:normal;transform:scaleX(0.8929);text-shadow:0 0 0.3px currentColor">Settings</div></div>
<svg style="left:12.5px;top:472.20000000000005px" width="4" height="5"><path d="M0.5 0.3 L3 2.2 L0.5 4.1 Z" fill="#c8c8c8"/></svg>
<div style="left:17.5px;top:471.70000000000005px;width:7.5px;height:5.5px;background:#8cc878;border-radius:0.5px"></div>
<div style="left:17.5px;top:470.80000000000007px;width:3.5px;height:1.4px;background:#8cc878"></div>
<div style="left:26.5px;top:469.20px;width:120.00px;height:10px;overflow:hidden"><div class="t" style="left:0;top:0;font-size:7.39px;line-height:10px;color:#d2d2d2;font-weight:normal;transform:scaleX(0.8929);text-shadow:0 0 0.3px currentColor">Libraries</div></div>
<div style="left:17.5px;top:479.79999999999995px;width:150.8px;height:11.8px;border:1px solid #5c5c5c;background:#444"></div>
<svg style="left:5.300000000000001px;top:483.70000000000005px" width="4" height="4"><path d="M3.2 0.2 V3.2 H0.2 Z" fill="#c8c8c8"/></svg>
<div style="left:9.8px;top:481.40000000000003px;width:6px;height:7.4px;background:#c6d8ee"></div>
<div style="left:10.8px;top:486.20000000000005px;width:4px;height:1px;background:#7090c0"></div>
<div style="left:19.0px;top:480.20px;width:127.50px;height:10px;overflow:hidden"><div class="t" style="left:0;top:0;font-size:7.39px;line-height:10px;color:#f0f0f0;font-weight:bold;transform:scaleX(0.8929);text-shadow:0 0 0.3px currentColor">Harness<span style="position:relative;top:-0.9px">_</span>Project.PrjHar</div></div>
<svg style="left:12.5px;top:494.70000000000005px" width="4" height="4"><path d="M3.2 0.2 V3.2 H0.2 Z" fill="#c8c8c8"/></svg>
<div style="left:17.5px;top:493.70000000000005px;width:7.5px;height:5.5px;background:#8cc878;border-radius:0.5px"></div>
<div style="left:17.5px;top:492.80000000000007px;width:3.5px;height:1.4px;background:#8cc878"></div>
<div style="left:26.5px;top:491.20px;width:120.00px;height:10px;overflow:hidden"><div class="t" style="left:0;top:0;font-size:7.39px;line-height:10px;color:#d2d2d2;font-weight:normal;transform:scaleX(0.8929);text-shadow:0 0 0.3px currentColor">Source Documents</div></div>
<div style="left:32.3px;top:502.00000000000006px;width:136.5px;height:10.8px;background:#5a7ea6"></div>
<div style="left:24.700000000000003px;top:504.70000000000005px;width:7.5px;height:5.5px;background:#d8dce4"></div>
<div style="left:25.700000000000003px;top:506.70000000000005px;width:4px;height:1.5px;background:#5a6a8a"></div>
<div style="left:34.1px;top:502.20px;width:112.40px;height:10px;overflow:hidden"><div class="t" style="left:0;top:0;font-size:7.39px;line-height:10px;color:#d2d2d2;font-weight:normal;transform:scaleX(0.8929);text-shadow:0 0 0.3px currentColor">USB Harness Wiring Diagram.WirDoc</div></div>
<div style="left:24.700000000000003px;top:515.7px;width:7.5px;height:5.5px;background:#dadada"></div>
<div style="left:25.700000000000003px;top:518.6px;width:5px;height:1.2px;background:#555"></div>
<div style="left:34.1px;top:513.20px;width:112.40px;height:10px;overflow:hidden"><div class="t" style="left:0;top:0;font-size:7.39px;line-height:10px;color:#d2d2d2;font-weight:normal;transform:scaleX(0.8929);text-shadow:0 0 0.3px currentColor">USB Harness Layout Drawing.LdrDoc</div></div>
<div style="left:24.700000000000003px;top:527.2px;width:6px;height:5.5px;background:#d8cf8a"></div>
<div style="left:28.200000000000003px;top:525.7px;width:3.5px;height:6px;background:#c8c8c8"></div>
<div style="left:34.1px;top:524.20px;width:112.40px;height:10px;overflow:hidden"><div class="t" style="left:0;top:0;font-size:7.39px;line-height:10px;color:#d2d2d2;font-weight:normal;transform:scaleX(0.8929);text-shadow:0 0 0.3px currentColor">USB Harness ActiveBOM.BomDoc</div></div>
<div style="left:26.700000000000003px;top:536.6px;width:5px;height:7px;background:#c8c8e8"></div>
<div style="left:24.700000000000003px;top:539.7px;width:4px;height:3.5px;background:#8a6ac0"></div>
<div style="left:34.1px;top:535.20px;width:112.40px;height:10px;overflow:hidden"><div class="t" style="left:0;top:0;font-size:7.39px;line-height:10px;color:#d2d2d2;font-weight:normal;transform:scaleX(0.8929);text-shadow:0 0 0.3px currentColor">USB Harness Draftsman Document.Harness</div></div>
<svg style="left:5.300000000000001px;top:549.7px" width="4" height="4"><path d="M3.2 0.2 V3.2 H0.2 Z" fill="#c8c8c8"/></svg>
<div style="left:9.8px;top:548.7px;width:7.5px;height:5.5px;background:#8cc878;border-radius:0.5px"></div>
<div style="left:9.8px;top:547.8000000000001px;width:3.5px;height:1.4px;background:#8cc878"></div>
<div style="left:19.0px;top:546.20px;width:127.50px;height:10px;overflow:hidden"><div class="t" style="left:0;top:0;font-size:7.39px;line-height:10px;color:#f0f0f0;font-weight:bold;transform:scaleX(0.8929);text-shadow:0 0 0.3px currentColor">Free Documents</div></div>
<svg style="left:12.5px;top:560.7px" width="4" height="4"><path d="M3.2 0.2 V3.2 H0.2 Z" fill="#c8c8c8"/></svg>
<div style="left:17.5px;top:559.7px;width:7.5px;height:5.5px;background:#8cc878;border-radius:0.5px"></div>
<div style="left:17.5px;top:558.8000000000001px;width:3.5px;height:1.4px;background:#8cc878"></div>
<div style="left:26.5px;top:557.20px;width:120.00px;height:10px;overflow:hidden"><div class="t" style="left:0;top:0;font-size:7.39px;line-height:10px;color:#d2d2d2;font-weight:normal;transform:scaleX(0.8929);text-shadow:0 0 0.3px currentColor">Source Documents</div></div>
<div style="left:24.700000000000003px;top:570.2px;width:7.5px;height:6px;background:#20905e"></div>
<div style="left:28.500000000000004px;top:571.2px;width:2.4px;height:2.4px;background:#e8fff4"></div>
<div style="left:34.1px;top:568.20px;width:112.40px;height:10px;overflow:hidden"><div class="t" style="left:0;top:0;font-size:7.39px;line-height:10px;color:#d2d2d2;font-weight:normal;transform:scaleX(0.8929);text-shadow:0 0 0.3px currentColor">Kame<span style="position:relative;top:-0.9px">_</span>FMU.PcbDoc</div></div>
<div style="left:24.700000000000003px;top:581.2px;width:7.5px;height:5.8px;background:#e8d890;border-top:1px solid #f4ecc0"></div>
<div style="left:25.900000000000002px;top:583.8000000000001px;width:5px;height:1px;background:#b8a058"></div>
<div style="left:34.1px;top:579.20px;width:112.40px;height:10px;overflow:hidden"><div class="t" style="left:0;top:0;font-size:7.39px;line-height:10px;color:#d2d2d2;font-weight:normal;transform:scaleX(0.8929);text-shadow:0 0 0.3px currentColor">4<span style="position:relative;top:-0.9px">_</span>cpu.SchDoc</div></div>
<div style="left:24.700000000000003px;top:592.2px;width:7.5px;height:6px;background:#20905e"></div>
<div style="left:28.500000000000004px;top:593.2px;width:2.4px;height:2.4px;background:#e8fff4"></div>
<div style="left:34.1px;top:590.20px;width:112.40px;height:10px;overflow:hidden"><div class="t" style="left:0;top:0;font-size:7.39px;line-height:10px;color:#d2d2d2;font-weight:normal;transform:scaleX(0.8929);text-shadow:0 0 0.3px currentColor">Kame<span style="position:relative;top:-0.9px">_</span>FMU.PcbDoc</div></div>
</div>
<div style="left:153px;top:589px;width:25px;height:12px"></div>
<svg style="left:156.5px;top:592.3px" width="6" height="6"><path d="M0.5 0.5 H3.5 L5 2 V5.5 H0.5 Z" fill="none" stroke="#d8d8d8" stroke-width="0.9"/></svg>
<svg style="left:156.5px;top:658.2px" width="6" height="6"><path d="M0.5 0.5 H3.5 L5 2 V5.5 H0.5 Z" fill="none" stroke="#d8d8d8" stroke-width="0.9"/></svg>
<svg style="left:156.5px;top:669.2px" width="6" height="6"><path d="M0.5 0.5 H3.5 L5 2 V5.5 H0.5 Z" fill="none" stroke="#d8d8d8" stroke-width="0.9"/></svg>
<svg style="left:156.5px;top:680.1px" width="6" height="6"><path d="M0.5 0.5 H3.5 L5 2 V5.5 H0.5 Z" fill="none" stroke="#d8d8d8" stroke-width="0.9"/></svg>
<svg style="left:179px;top:97px" width="4" height="3"><path d="M0 2.2 H3.8 L1.9 0 Z" fill="#999"/></svg>
<div style="left:179.8px;top:573px;width:2.4px;height:115px;background:#8a8a8a;border-radius:1px"></div>
<svg style="left:179px;top:689px" width="4" height="3"><path d="M0 0 H3.6 L1.8 2 Z" fill="#aaa"/></svg>
<svg style="left:0;top:0" width="1280" height="720" viewBox="0 0 1280 720"><path d="M540.5 54 H547 L544.6 57.2 V60.5 H542.9 V57.2 Z" fill="#eef2f6"/><path d="M560 53.5 V60.5 M556.5 57 H563.5" stroke="#5c6884" stroke-width="0.9"/><rect x="572.5" y="53.3" width="7.3" height="7.3" fill="none" stroke="#505868" stroke-width="1"/><path d="M589.5 53.5 V60.5 M590.5 54.5 H593 M590.5 56.5 H595 V58.5 H590.5 Z" stroke="#8a8a8a" stroke-width="0.9" fill="#777"/><rect x="599.8" y="51" width="0.8" height="12" fill="#2a2a2a"/><rect x="606.2" y="53.5" width="4.3" height="7" fill="#ead485"/><path d="M620.5 54.8 Q624 53.5 628 56.5 M620.5 57.2 Q624 56 628 59" fill="none" stroke="#c07a9a" stroke-width="1.2"/><path d="M621 55.8 Q624 54.8 627.5 57.6" fill="none" stroke="#7aa0d8" stroke-width="0.8"/><path d="M636.5 54.2 Q641 53.5 640.5 57 Q640 60 636.5 59.8" fill="none" stroke="#6a9ad6" stroke-width="1.1"/><path d="M637 59.8 Q640 60 641 58" fill="none" stroke="#d07080" stroke-width="1.1"/><path d="M641 56.7 H644.5" stroke="#78c078" stroke-width="1.2"/><rect x="652.3" y="54" width="7.8" height="6" fill="#b8b8b8"/><rect x="656.5" y="54" width="3.6" height="2.5" fill="#7890a8"/><rect x="656.5" y="58.4" width="3.6" height="1.6" fill="#78a060"/><path d="M669.5 61 L672.8 53.5 L676 61 M670.8 58.5 H674.8" fill="none" stroke="#4a72b0" stroke-width="1.2"/><path d="M684.2 59.5 Q684.5 54 688.4 54 Q692.3 54 692.5 59.5" fill="none" stroke="#5a6070" stroke-width="1"/><path d="M565.4 64.2 L567.9 61.8 V64.2 Z" fill="#e6e6e6"/><path d="M581.4 64.2 L583.9 61.8 V64.2 Z" fill="#e6e6e6"/><path d="M597.4 64.2 L599.9 61.8 V64.2 Z" fill="#e6e6e6"/><path d="M628.9 64.2 L631.4 61.8 V64.2 Z" fill="#e6e6e6"/><path d="M644.9 64.2 L647.4 61.8 V64.2 Z" fill="#e6e6e6"/><path d="M660.9 64.2 L663.4 61.8 V64.2 Z" fill="#e6e6e6"/><path d="M676.9 64.2 L679.4 61.8 V64.2 Z" fill="#e6e6e6"/><path d="M693.4 64.2 L695.9 61.8 V64.2 Z" fill="#e6e6e6"/><rect x="451.2" y="297.5" width="16" height="118.2" fill="#fcf2ac" stroke="#b8a878" stroke-width="0.9"/><path d="M461 308.4 H479.7" stroke="#555a66" stroke-width="0.8"/><circle cx="459" cy="308.4" r="1.75" fill="#fdfdfd" stroke="#40444c" stroke-width="0.85"/><circle cx="481.7" cy="308.4" r="1.75" fill="#fdfdfd" stroke="#40444c" stroke-width="0.85"/><text x="472.2" y="307.0" font-size="4.6" fill="#30343f" font-weight="bold" font-family="Liberation Serif">1</text><path d="M461 319.3 H479.7" stroke="#555a66" stroke-width="0.8"/><circle cx="459" cy="319.3" r="1.75" fill="#fdfdfd" stroke="#40444c" stroke-width="0.85"/><circle cx="481.7" cy="319.3" r="1.75" fill="#fdfdfd" stroke="#40444c" stroke-width="0.85"/><text x="472.2" y="317.90000000000003" font-size="4.6" fill="#30343f" font-weight="bold" font-family="Liberation Serif">2</text><path d="M461 330.2 H479.7" stroke="#555a66" stroke-width="0.8"/><circle cx="459" cy="330.2" r="1.75" fill="#fdfdfd" stroke="#40444c" stroke-width="0.85"/><circle cx="481.7" cy="330.2" r="1.75" fill="#fdfdfd" stroke="#40444c" stroke-width="0.85"/><text x="472.2" y="328.8" font-size="4.6" fill="#30343f" font-weight="bold" font-family="Liberation Serif">3</text><path d="M461 341.1 H479.7" stroke="#555a66" stroke-width="0.8"/><circle cx="459" cy="341.1" r="1.75" fill="#fdfdfd" stroke="#40444c" stroke-width="0.85"/><circle cx="481.7" cy="341.1" r="1.75" fill="#fdfdfd" stroke="#40444c" stroke-width="0.85"/><text x="472.2" y="339.70000000000005" font-size="4.6" fill="#30343f" font-weight="bold" font-family="Liberation Serif">4</text><path d="M461 352 H479.7" stroke="#555a66" stroke-width="0.8"/><circle cx="459" cy="352" r="1.75" fill="#fdfdfd" stroke="#40444c" stroke-width="0.85"/><circle cx="481.7" cy="352" r="1.75" fill="#fdfdfd" stroke="#40444c" stroke-width="0.85"/><text x="472.2" y="350.6" font-size="4.6" fill="#30343f" font-weight="bold" font-family="Liberation Serif">5</text><path d="M461 362.9 H479.7" stroke="#555a66" stroke-width="0.8"/><circle cx="459" cy="362.9" r="1.75" fill="#fdfdfd" stroke="#40444c" stroke-width="0.85"/><circle cx="481.7" cy="362.9" r="1.75" fill="#fdfdfd" stroke="#40444c" stroke-width="0.85"/><text x="472.2" y="361.5" font-size="4.6" fill="#30343f" font-weight="bold" font-family="Liberation Serif">6</text><path d="M461 373.6 H479.7" stroke="#555a66" stroke-width="0.8"/><circle cx="459" cy="373.6" r="1.75" fill="#fdfdfd" stroke="#40444c" stroke-width="0.85"/><circle cx="481.7" cy="373.6" r="1.75" fill="#fdfdfd" stroke="#40444c" stroke-width="0.85"/><text x="472.2" y="372.20000000000005" font-size="4.6" fill="#30343f" font-weight="bold" font-family="Liberation Serif">7</text><path d="M461 384.3 H479.7" stroke="#555a66" stroke-width="0.8"/><circle cx="459" cy="384.3" r="1.75" fill="#fdfdfd" stroke="#40444c" stroke-width="0.85"/><circle cx="481.7" cy="384.3" r="1.75" fill="#fdfdfd" stroke="#40444c" stroke-width="0.85"/><text x="472.2" y="382.90000000000003" font-size="4.6" fill="#30343f" font-weight="bold" font-family="Liberation Serif">8</text><path d="M461 395.1 H479.7" stroke="#555a66" stroke-width="0.8"/><circle cx="459" cy="395.1" r="1.75" fill="#fdfdfd" stroke="#40444c" stroke-width="0.85"/><text x="472.2" y="393.70000000000005" font-size="4.6" fill="#30343f" font-weight="bold" font-family="Liberation Serif">9</text><path d="M461 406.1 H479.7" stroke="#555a66" stroke-width="0.8"/><circle cx="459" cy="406.1" r="1.75" fill="#fdfdfd" stroke="#40444c" stroke-width="0.85"/><circle cx="481.7" cy="406.1" r="1.75" fill="#fdfdfd" stroke="#40444c" stroke-width="0.85"/><text x="471" y="404.70000000000005" font-size="4.6" fill="#30343f" font-weight="bold" font-family="Liberation Serif">10</text><path d="M480 393 L484 397.2 M484 393 L480 397.2" stroke="#303040" stroke-width="0.9"/><text x="487.5" y="397" font-size="4.8" fill="#3c3c9c" font-weight="bold" font-family="Liberation Serif">No1</text><text x="451" y="2.0" font-size="4.6" fill="#3c3c9c" font-weight="bold" font-family="Liberation Serif"></text><text x="451.3" y="296.2" font-size="4.8" fill="#3c3c9c" font-weight="bold" font-family="Liberation Serif">J1</text><text x="451" y="421" font-size="4.6" fill="#3c3c9c" font-weight="bold" font-family="Liberation Serif">90142-0010</text><path d="M483.5 308.6 H830" stroke="#d62222" stroke-width="1.9"/><path d="M483.5 330.25 H797.7 V319.25 H829.9" fill="none" stroke="#7a7e8a" stroke-width="1"/><path d="M483.5 351.6 H808.5 V330.25 H829.9" fill="none" stroke="#7a7e8a" stroke-width="1"/><path d="M483.5 373.5 H819.5 V341.1 H830" fill="none" stroke="#0c0c0c" stroke-width="1.9"/><path d="M483.5 406.2 H568.5" stroke="#7a7e8a" stroke-width="1"/><path d="M568.5 404 L572.5 408.4 M572.5 404 L568.5 408.4" stroke="#303040" stroke-width="0.9"/><text x="527.2" y="404.6" font-size="4.8" fill="#3c3c9c" font-weight="bold" font-family="Liberation Serif">W10</text><text x="574.6" y="407.8" font-size="4.8" fill="#3c3c9c" font-weight="bold" font-family="Liberation Serif">No5</text><text x="656.8" y="307.6" font-size="4.8" fill="#3c3c9c" font-weight="bold" font-family="Liberation Serif">+5V</text><text x="651.2" y="372" font-size="4.8" fill="#3c3c9c" font-weight="bold" font-family="Liberation Serif">GND</text><text x="683.8" y="304.6" font-size="5.2" fill="#30343f" font-family="Liberation Serif">C1</text><text x="683.8" y="380.6" font-size="4.8" fill="#3c3c9c" font-weight="bold" font-family="Liberation Serif">2466C SL005</text><ellipse cx="692.8" cy="340" rx="8.8" ry="34.8" fill="none" stroke="#50545c" stroke-width="0.8"/><text x="629.6" y="326.4" font-size="4.6" fill="#3c3c9c" font-weight="bold" font-family="Liberation Serif">Twisted</text><text x="641" y="328.8" font-size="4.6" fill="#3c3c9c" font-weight="bold" font-family="Liberation Serif">DATA0-</text><text x="657" y="326.4" font-size="4.6" fill="#3c3c9c" font-weight="bold" font-family="Liberation Serif">SH1</text><text x="645.8" y="351" font-size="4.6" fill="#3c3c9c" font-weight="bold" font-family="Liberation Serif">DATA0+</text><path d="M629.7 332 L632 327.8 L640.5 354.5 L643.5 349.5" fill="none" stroke="#40445a" stroke-width="0.7"/><ellipse cx="660.2" cy="341" rx="3.8" ry="14" fill="none" stroke="#70788a" stroke-width="0.7" stroke-dasharray="1 0.8"/><rect x="845.8" y="297.2" width="11.6" height="54.2" fill="#fcf2ac" stroke="#b8a878" stroke-width="0.9"/><path d="M833.5 308.35 H850" stroke="#555a66" stroke-width="0.8"/><circle cx="831.8" cy="308.35" r="1.7" fill="#fdfdfd" stroke="#40444c" stroke-width="0.85"/><circle cx="851.8" cy="308.35" r="1.75" fill="#fdfdfd" stroke="#40444c" stroke-width="0.85"/><text x="839.8" y="306.95000000000005" font-size="4.6" fill="#30343f" font-weight="bold" font-family="Liberation Serif">1</text><path d="M833.5 319.25 H850" stroke="#555a66" stroke-width="0.8"/><circle cx="831.8" cy="319.25" r="1.7" fill="#fdfdfd" stroke="#40444c" stroke-width="0.85"/><circle cx="851.8" cy="319.25" r="1.75" fill="#fdfdfd" stroke="#40444c" stroke-width="0.85"/><text x="839.8" y="317.85" font-size="4.6" fill="#30343f" font-weight="bold" font-family="Liberation Serif">2</text><path d="M833.5 330.25 H850" stroke="#555a66" stroke-width="0.8"/><circle cx="831.8" cy="330.25" r="1.7" fill="#fdfdfd" stroke="#40444c" stroke-width="0.85"/><circle cx="851.8" cy="330.25" r="1.75" fill="#fdfdfd" stroke="#40444c" stroke-width="0.85"/><text x="839.8" y="328.85" font-size="4.6" fill="#30343f" font-weight="bold" font-family="Liberation Serif">3</text><path d="M833.5 341.1 H850" stroke="#555a66" stroke-width="0.8"/><circle cx="831.8" cy="341.1" r="1.7" fill="#fdfdfd" stroke="#40444c" stroke-width="0.85"/><circle cx="851.8" cy="341.1" r="1.75" fill="#fdfdfd" stroke="#40444c" stroke-width="0.85"/><text x="839.8" y="339.70000000000005" font-size="4.6" fill="#30343f" font-weight="bold" font-family="Liberation Serif">4</text><text x="845.8" y="296" font-size="4.8" fill="#3c3c9c" font-weight="bold" font-family="Liberation Serif">J2</text><text x="845.8" y="355.6" font-size="4.6" fill="#3c3c9c" font-weight="bold" font-family="Liberation Serif">50-57-9004</text></svg>
<div style="left:1036px;top:31px;width:4px;height:659px;background:#2f2f2f"></div>
<div style="left:1036px;top:690px;width:4px;height:13px;background:#363636"></div>
<div style="left:196px;top:690px;width:840px;height:13px;background:#363636"></div>
<div style="left:1040px;top:31px;width:240px;height:671px;background:#3a3a3a"></div>
<div style="left:1040px;top:32px;width:235px;height:13.5px;background:#3e3e3e"></div>
<div class="t" style="left:1043px;top:33.34px;font-size:8.40px;line-height:10.92px;color:#e0e0e0;font-weight:bold;transform:scaleX(0.8929);">Messages</div>
<svg style="left:1250px;top:37px;" width="4" height="3" viewBox="0 0 4 3"><path d="M0 0 H3.6 L1.8 2.6 Z" fill="#e8e8e8"/></svg>
<div style="left:1260.3px;top:36px;width:2.5px;height:4.5px;background:#d8d8d8;border-radius:1px"></div>
<svg style="left:1270px;top:37px;" width="4" height="4" viewBox="0 0 4 4"><path d="M0.3 0.3 L3.5 3.5 M3.5 0.3 L0.3 3.5" stroke="#e8e8e8" stroke-width="1.1"/></svg>
<div style="left:0px;top:703.5px;width:1280px;height:16.5px;background:#424242;border-top:1px solid #333;border-bottom:1.5px solid #232323"></div>
<div class="t" style="left:3px;top:706.98px;font-size:7.73px;line-height:10.05px;color:#d0d0d0;font-weight:normal;transform:scaleX(0.8929);">X:-50mil Y:2100.000mil</div>
<div class="t" style="left:82px;top:706.98px;font-size:7.73px;line-height:10.05px;color:#d0d0d0;font-weight:normal;transform:scaleX(0.8929);">Grid:50mil</div>
<div style="left:196.3px;top:691.2px;width:28.3px;height:10.8px;background:#4a4a4a"></div>
<div class="t" style="left:201px;top:692.20px;font-size:7.39px;line-height:9.61px;color:#e8e8e8;font-weight:bold;transform:scaleX(0.8929);">Editor</div>
<div style="left:1253.2px;top:707px;width:24px;height:10px;background:#4d4d4d"></div>
<div class="t" style="left:1255.5px;top:707.54px;font-size:7.17px;line-height:9.32px;color:#e0e0e0;font-weight:normal;transform:scaleX(0.8929);">Panels</div>
<div style="left:1045.2px;top:51.5px;width:228px;height:599.5px;background:#3b3b3b;border:1px solid #2f2f2f"></div>
<div style="left:1046px;top:52px;width:226px;height:11px;background:#444"></div>
<div class="t" style="left:1046.5px;top:52.99px;font-size:7.39px;line-height:9.61px;color:#d0d0d0;font-weight:normal;transform:scaleX(0.8929);">Class</div>
<div class="t" style="left:1073px;top:52.99px;font-size:7.39px;line-height:9.61px;color:#d0d0d0;font-weight:normal;transform:scaleX(0.8929);">Docum...</div>
<div class="t" style="left:1102.5px;top:52.99px;font-size:7.39px;line-height:9.61px;color:#d0d0d0;font-weight:normal;transform:scaleX(0.8929);">Sou...</div>
<div class="t" style="left:1122.5px;top:52.99px;font-size:7.39px;line-height:9.61px;color:#d0d0d0;font-weight:normal;transform:scaleX(0.8929);">Message</div>
<div class="t" style="left:1215.5px;top:52.99px;font-size:7.39px;line-height:9.61px;color:#d0d0d0;font-weight:normal;transform:scaleX(0.8929);">Time</div>
<div class="t" style="left:1239.5px;top:52.99px;font-size:7.39px;line-height:9.61px;color:#d0d0d0;font-weight:normal;transform:scaleX(0.8929);">Date</div>
<div class="t" style="left:1263.5px;top:52.99px;font-size:7.39px;line-height:9.61px;color:#d0d0d0;font-weight:normal;transform:scaleX(0.8929);">N..</div>
<div style="left:1071.5px;top:53px;width:0.8px;height:10px;background:#3a3a3a"></div>
<div style="left:1100.5px;top:53px;width:0.8px;height:10px;background:#3a3a3a"></div>
<div style="left:1120px;top:53px;width:0.8px;height:10px;background:#3a3a3a"></div>
<div style="left:1212.5px;top:53px;width:0.8px;height:10px;background:#3a3a3a"></div>
<div style="left:1237px;top:53px;width:0.8px;height:10px;background:#3a3a3a"></div>
<div style="left:1263px;top:53px;width:0.8px;height:10px;background:#3a3a3a"></div>
<div style="left:1056px;top:66.5px;width:6px;height:6px;background:#f2c84a;border:0.5px solid #d8a830"></div>
<div style="left:1064.5px;top:65px;width:7.0px;height:10px;overflow:hidden"><div class="t" style="left:0;top:0;font-size:6.6px;line-height:10px;color:#cfcfcf">[Ei</div></div>
<div style="left:1073px;top:65px;width:27px;height:10px;overflow:hidden"><div class="t" style="left:0;top:0;font-size:6.6px;line-height:10px;color:#cfcfcf">Harness</div></div>
<div style="left:1102.5px;top:65px;width:17.5px;height:10px;overflow:hidden"><div class="t" style="left:0;top:0;font-size:6.6px;line-height:10px;color:#cfcfcf">Projec</div></div>
<div style="left:1122.5px;top:65px;width:90.0px;height:10px;overflow:hidden"><div class="t" style="left:0;top:0;font-size:6.6px;line-height:10px;color:#cfcfcf">Harness Layout Drawing1.Ldrl</div></div>
<div style="left:1214px;top:65px;width:23px;height:10px;overflow:hidden"><div class="t" style="left:0;top:0;font-size:6.6px;line-height:10px;color:#cfcfcf">10:15:1</div></div>
<div style="left:1237.3px;top:65px;width:24.700000000000045px;height:10px;overflow:hidden"><div class="t" style="left:0;top:0;font-size:6.6px;line-height:10px;color:#cfcfcf">4/1/20:</div></div>
<div style="left:1263.5px;top:65px;width:8.5px;height:10px;overflow:hidden"><div class="t" style="left:0;top:0;font-size:6.6px;line-height:10px;color:#cfcfcf">8</div></div>
<div style="left:1045.2px;top:653.4px;width:228px;height:44px;background:#3b3b3b;border:1px solid #2f2f2f"></div>
<div style="left:103.3px;top:352px;width:192.3px;height:219.5px;background:#404040;border:1px solid #2e2e2e;box-shadow:1px 1px 2px rgba(0,0,0,0.35)"></div>
<div class="t" style="left:122.8px;top:356.46px;font-size:8.06px;line-height:10.48px;color:#dedede;font-weight:normal;transform:scaleX(0.8929);">Make Project Available Online...</div>
<div class="t" style="left:122.8px;top:373.26px;font-size:8.06px;line-height:10.48px;color:#dedede;font-weight:normal;transform:scaleX(0.8929);">Validate Harness Project Harness<span style="position:relative;top:-0.9px">_</span>Project.PrjHar</div>
<div class="t" style="left:122.8px;top:390.46px;font-size:8.06px;line-height:10.48px;color:#dedede;font-weight:normal;transform:scaleX(0.8929);">Add <u>N</u>ew to Project</div>
<svg style="left:286.8px;top:393.4px" width="4" height="5"><path d="M0.3 0.2 L3 2.3 L0.3 4.4 Z" fill="#e0e0e0"/></svg>
<div class="t" style="left:122.8px;top:404.96px;font-size:8.06px;line-height:10.48px;color:#dedede;font-weight:normal;transform:scaleX(0.8929);"><u>A</u>dd Existing to Project...</div>
<div class="t" style="left:122.8px;top:419.46px;font-size:8.06px;line-height:10.48px;color:#dedede;font-weight:normal;transform:scaleX(0.8929);">Save</div>
<div class="t" style="left:122.8px;top:433.76px;font-size:8.06px;line-height:10.48px;color:#dedede;font-weight:normal;transform:scaleX(0.8929);"><u>R</u>ename...</div>
<div class="t" style="left:122.8px;top:450.46px;font-size:8.06px;line-height:10.48px;color:#dedede;font-weight:normal;transform:scaleX(0.8929);">C<u>l</u>ose Project Documents</div>
<div class="t" style="left:122.8px;top:464.96px;font-size:8.06px;line-height:10.48px;color:#dedede;font-weight:normal;transform:scaleX(0.8929);">Close Project</div>
<div class="t" style="left:122.8px;top:479.96px;font-size:8.06px;line-height:10.48px;color:#dedede;font-weight:normal;transform:scaleX(0.8929);">Explore</div>
<div class="t" style="left:122.8px;top:497.06px;font-size:8.06px;line-height:10.48px;color:#dedede;font-weight:normal;transform:scaleX(0.8929);">History &amp; V<u>e</u>rsion Control</div>
<svg style="left:286.8px;top:500.0px" width="4" height="5"><path d="M0.3 0.2 L3 2.3 L0.3 4.4 Z" fill="#e0e0e0"/></svg>
<div class="t" style="left:122.8px;top:514.16px;font-size:8.06px;line-height:10.48px;color:#dedede;font-weight:normal;transform:scaleX(0.8929);"><u>P</u>roject Packager...</div>
<div style="left:104px;top:525.3px;width:190.5px;height:14.7px;background:#5e82a8"></div>
<div class="t" style="left:122.8px;top:528.76px;font-size:8.06px;line-height:10.48px;color:#f4f4f4;font-weight:normal;transform:scaleX(0.8929);">Project Releaser...</div>
<div class="t" style="left:122.8px;top:544.96px;font-size:8.06px;line-height:10.48px;color:#dedede;font-weight:normal;transform:scaleX(0.8929);">Share...</div>
<div class="t" style="left:122.8px;top:560.16px;font-size:8.06px;line-height:10.48px;color:#dedede;font-weight:normal;transform:scaleX(0.8929);">Project <u>O</u>ptions...</div>
<div style="left:122px;top:386px;width:166px;height:1px;background:#2f2f2f"></div>
<div style="left:122px;top:446.5px;width:166px;height:1px;background:#2f2f2f"></div>
<div style="left:122px;top:492.3px;width:166px;height:1px;background:#2f2f2f"></div>
<div style="left:208px;top:509.2px;width:80px;height:1px;background:#2f2f2f"></div>
<svg style="left:106px;top:357px" width="10" height="8"><path d="M1 6.5 Q0 4 2.5 3.8 Q3.5 1 6 1.8 Q8.5 2.2 8.3 4.5 Q9.6 5 9 6.5 Z" fill="#6ab4e0"/></svg>
<svg style="left:106px;top:373px" width="10" height="10"><path d="M1 4 H9 V9 H1 Z" fill="#e8e4c8"/><path d="M2.5 4 L5 1 L8.5 3.5" fill="none" stroke="#9a9ad8" stroke-width="1.2"/></svg>
<svg style="left:106px;top:404px" width="10" height="10"><path d="M1 3.5 H4 L5 4.5 H9 V9 H1 Z" fill="#e4dfc0"/><path d="M6 3 H10 M8 1 V5" stroke="#68c048" stroke-width="1.3"/></svg>
<svg style="left:107.5px;top:497px" width="8" height="8"><circle cx="4" cy="4" r="3.4" fill="#eaeaea"/><path d="M4 2 V4.2 H5.6" fill="none" stroke="#555" stroke-width="0.9"/></svg>
<svg style="left:107px;top:513px" width="9" height="10"><path d="M1 1 L4.5 3.5 L8 1 V5 L4.5 8.5 L1 5 Z" fill="#8a78e0"/><path d="M3 4.5 L4.5 6 L6 4.5" fill="none" stroke="#e8e8ff" stroke-width="0.9"/></svg>
<svg style="left:106px;top:528px" width="10" height="9"><rect x="1" y="1" width="8" height="7" fill="#2a8a6a"/><rect x="1" y="1" width="8" height="2" fill="#a8d0e8"/><rect x="5" y="4" width="3" height="3" fill="#58c088"/></svg>
<svg style="left:106.5px;top:545.5px" width="9" height="8"><path d="M0.8 7 Q1.5 3 6 3 M4.5 0.8 L7.5 3 L4.5 5.2" fill="none" stroke="#5a9ae0" stroke-width="1.4"/></svg>
<svg style="left:106px;top:559px" width="10" height="10"><path d="M1 2 H4 L5 3 H8 V8 H1 Z" fill="#c8b078"/><circle cx="7" cy="7" r="2" fill="#b8b8b8"/></svg>
<svg style="left:216px;top:534.5px" width="8" height="11"><path d="M0.5 0.5 V8.5 L2.5 6.8 L4 9.8 L5.3 9.2 L3.9 6.3 H6.5 Z" fill="#fff" stroke="#222" stroke-width="0.7"/></svg></body></html>
